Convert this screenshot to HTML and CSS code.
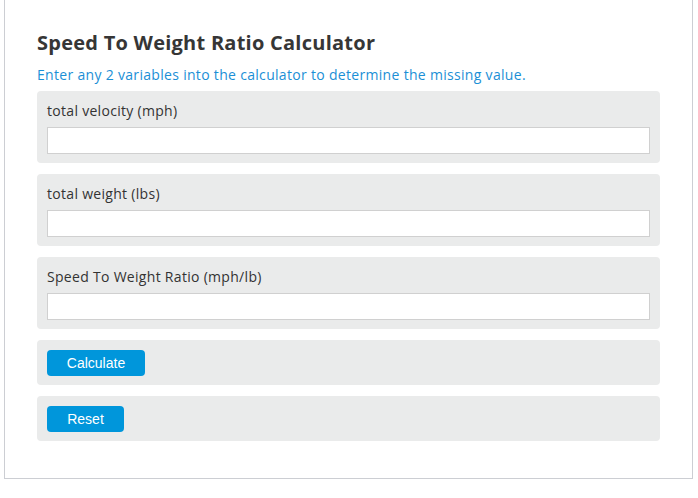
FILE: index.html
```html
<!DOCTYPE html>
<html>
<head>
    <link rel="stylesheet" href="styles.css">
</head>
<body>
<div class="calc">
  <h2 class="title">Speed To Weight Ratio Calculator</h2>
  <p class="intro">Enter any 2 variables into the calculator to determine the missing value.</p>
  <div class="field">
    <label for="velocity">total velocity (mph)</label>
    <input type="text" id="velocity">
  </div>
  <div class="field">
    <label for="weight">total weight (lbs)</label>
    <input type="text" id="weight">
  </div>
  <div class="field">
    <label for="ratio">Speed To Weight Ratio (mph/lb)</label>
    <input type="text" id="ratio">
  </div>
  <div class="field">
    <button class="btn btn-calc">Calculate</button>
  </div>
  <div class="field">
    <button class="btn btn-reset">Reset</button>
  </div>
</div>
</body>
</html>
```

FILE: styles.css
```css
body {
  margin: 0;
  font-family: "Open Sans", sans-serif;
  background: #fff;
}

.calc {
  margin-left: 4px;
  width: 623px;
  border: 1px solid #ccced3;
  border-top: none;
  padding: 28px 32px 37px 32px;
}

.title {
  margin: 0;
  font-size: 20px;
  line-height: 30px;
  font-weight: 700;
  letter-spacing: 0.25px;
  color: #363636;
}

.intro {
  margin: 7px 0 6px 0;
  font-size: 14px;
  line-height: 20px;
  letter-spacing: 0.31px;
  color: #1b8fd6;
}

.field {
  background: #eaebeb;
  border-radius: 4px;
  padding: 10px 10px 9px 10px;
  margin-bottom: 11px;
}

.field:last-child {
  margin-bottom: 0;
}

.field label {
  display: block;
  font-size: 14px;
  line-height: 20px;
  letter-spacing: 0.3px;
  color: #333;
  margin-bottom: 6px;
}

.field input {
  display: block;
  box-sizing: border-box;
  width: 100%;
  height: 27px;
  border: 1px solid #d0d0d0;
  background: #fff;
  margin: 0;
}

.btn {
  display: block;
  height: 26px;
  border: none;
  border-radius: 4px;
  background: #0096db;
  color: #fff;
  font-family: "Liberation Sans", Arial, sans-serif;
  font-size: 14px;
  padding: 0;
}

.btn-calc {
  width: 98px;
}

.btn-reset {
  width: 77px;
}
```
